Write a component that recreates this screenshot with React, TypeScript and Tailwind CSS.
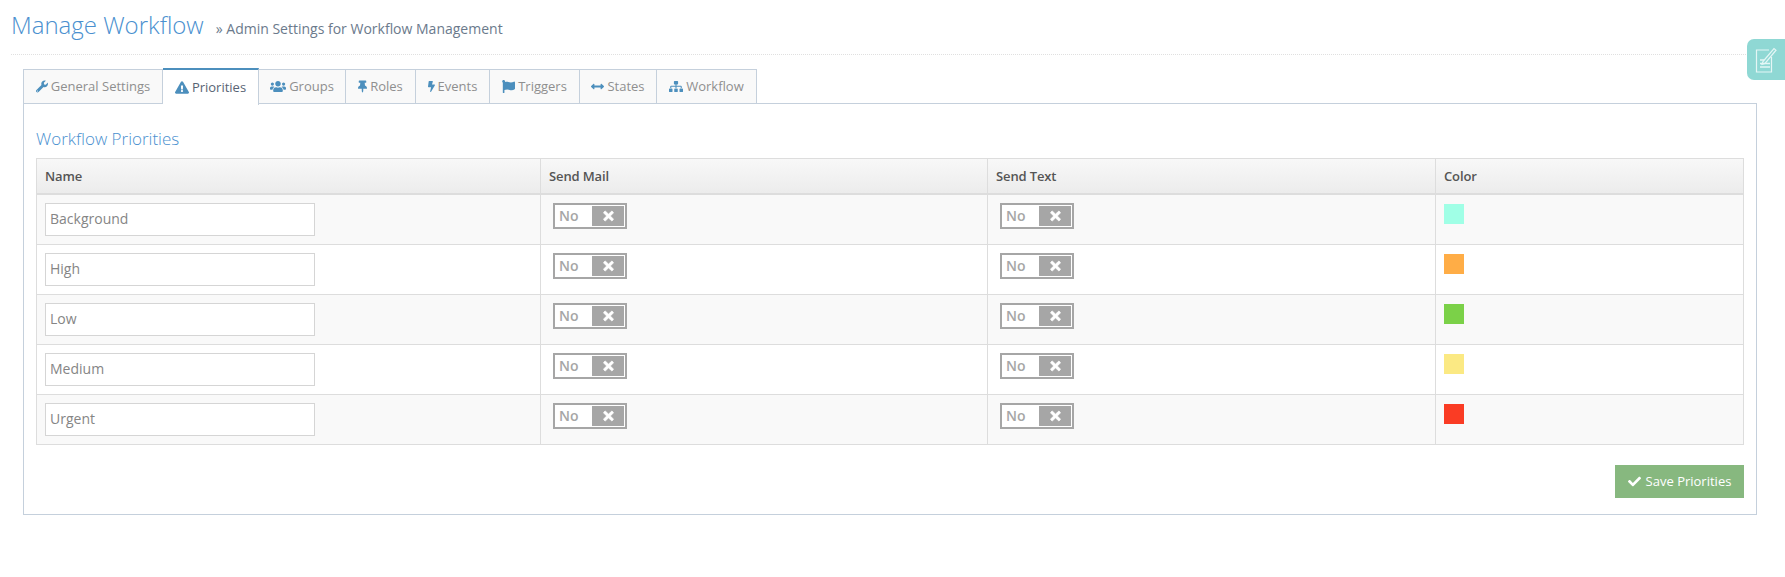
import React from "react";
import { FaWrench, FaExclamationTriangle, FaUsers, FaThumbtack, FaBolt, FaFlag, FaArrowsAltH, FaSitemap, FaCheck, FaTimes } from "react-icons/fa";

const tabs = [
  { label: "General Settings", Icon: FaWrench, w: "w-[140px] border-l", iw: "w-[12px]" },
  { label: "Priorities", Icon: FaExclamationTriangle, w: "w-[96px]", iw: "w-[14px]", active: true },
  { label: "Groups", Icon: FaUsers, w: "w-[87px]", iw: "w-[16px]" },
  { label: "Roles", Icon: FaThumbtack, w: "w-[70px]", iw: "w-[9px]" },
  { label: "Events", Icon: FaBolt, w: "w-[74px]", iw: "w-[7px]" },
  { label: "Triggers", Icon: FaFlag, w: "w-[90px]", iw: "w-[13px]" },
  { label: "States", Icon: FaArrowsAltH, w: "w-[77px]", iw: "w-[13px]" },
  { label: "Workflow", Icon: FaSitemap, w: "w-[100px]", iw: "w-[14px]" },
];

const rows = [
  { name: "Background", color: "bg-[#a0ffe6]" },
  { name: "High", color: "bg-[#ffad46]" },
  { name: "Low", color: "bg-[#7bd148]" },
  { name: "Medium", color: "bg-[#fbe983]" },
  { name: "Urgent", color: "bg-[#fa3c24]" },
];

function Toggle() {
  return (
    <div className="flex h-[26px] w-[74px] items-center justify-between border-2 border-[#a6a6a6] bg-white py-[1px] pl-[4px] pr-[1px]">
      <span className="text-[14px] font-semibold leading-none text-[#a6a6a6]">No</span>
      <span className="flex h-[20px] w-[32px] items-center justify-center bg-[#a6a6a6] text-white">
        <FaTimes className="h-[14px] w-[13px] stroke-[30]" />
      </span>
    </div>
  );
}

export default function App() {
  return (
    <div className="relative h-[577px] w-[1785px] overflow-hidden bg-white font-['Open_Sans',sans-serif] text-[13px] text-[#797979]">
      <div className="mx-[11px] flex h-[55px] items-start border-b border-dotted border-[#e0e0e0] pt-[8px]">
        <h1 className="text-[24px] font-light leading-[33px] text-[#4a90cf]">Manage Workflow</h1>
        <span className="ml-[12px] mt-[11px] text-[14px] leading-[19px] text-[#6b7a8c]">» Admin Settings for Workflow Management</span>
      </div>
      <div className="mx-[23px] mt-[14px] w-[1734px]">
        <div className="relative z-10 flex h-[35px] items-stretch">
          {tabs.map(({ label, Icon, w, iw, active }) => (
            <div
              key={label}
              className={
                (active
                  ? "-mt-[1px] mb-[-1px] border-r border-t-2 border-[#c5d0dc] border-t-[#4c8fbd] bg-white text-[#576373] "
                  : "border-y border-r border-[#c5d0dc] bg-[#f9f9f9] text-[#8f8f8f] ") +
                "flex items-center justify-center gap-[3px] " + w
              }
            >
              <Icon className={"h-[13px] text-[#4c8fbd] " + iw} />
              <span>{label}</span>
            </div>
          ))}
        </div>
        <div className="-mt-px h-[412px] border border-[#c5d0dc] px-[12px] pt-[24px]">
          <h4 className="text-[17px] font-light leading-[22px] text-[#4a90cf]">Workflow Priorities</h4>
          <div className="mt-[8px] w-[1708px] border border-b-0 border-[#dddddd]">
            <div className="grid h-[36px] grid-cols-[503px_447px_448px_1fr] border-b-2 border-[#dddddd] bg-gradient-to-b from-[#f8f8f8] to-[#ececec] text-[13px] font-semibold tracking-[-0.01em] text-[#555555]">
              {["Name", "Send Mail", "Send Text", "Color"].map((h, i) => (
                <div key={h} className={i ? "flex items-center border-l border-[#dddddd] pl-[8px] pt-[2px]" : "flex items-center pl-[8px] pt-[2px]"}>{h}</div>
              ))}
            </div>
            {rows.map((r, i) => (
              <div key={r.name} className={(i % 2 === 0 ? "bg-[#f9f9f9] " : "bg-white ") + "grid h-[50px] grid-cols-[503px_447px_448px_1fr] border-b border-[#dddddd]"}>
                <div className="pl-[8px] pt-[8px]">
                  <div className="flex h-[33px] w-[270px] items-center border border-[#d5d5d5] bg-white pb-[2px] pl-[4px] text-[14px] text-[#858585]">{r.name}</div>
                </div>
                <div className="border-l border-[#dddddd] pl-[12px] pt-[8px]"><Toggle /></div>
                <div className="border-l border-[#dddddd] pl-[12px] pt-[8px]"><Toggle /></div>
                <div className="border-l border-[#dddddd] pl-[8px] pt-[9px]">
                  <div className={"h-[20px] w-[20px] " + r.color} />
                </div>
              </div>
            ))}
          </div>
          <div className="mt-[20px] flex justify-end">
            <button className="flex h-[33px] w-[129px] items-center justify-center gap-[5px] bg-[#87b87f] text-[13px] text-white">
              <FaCheck className="h-[13px] w-[13px]" />
              Save Priorities
            </button>
          </div>
        </div>
      </div>
      <div className="absolute left-[1747px] top-[39px] flex h-[41px] w-[38px] items-center justify-center rounded-l-[7px] bg-[#8fd8d4]">
        <svg viewBox="0 0 23 27" className="ml-[-2px] h-[27px] w-[23px]" fill="none" stroke="#e4f6f5" strokeWidth="1.2">
          <path d="M15 4H2.5v22h15V11" />
          <path d="M9 15.5 20 2.5l2 1.7L11 17.5l-3 .8z" />
          <path d="M6 14h4M6 17.5h10M6 21h10" strokeWidth="1.4" />
        </svg>
      </div>
    </div>
  );
}
